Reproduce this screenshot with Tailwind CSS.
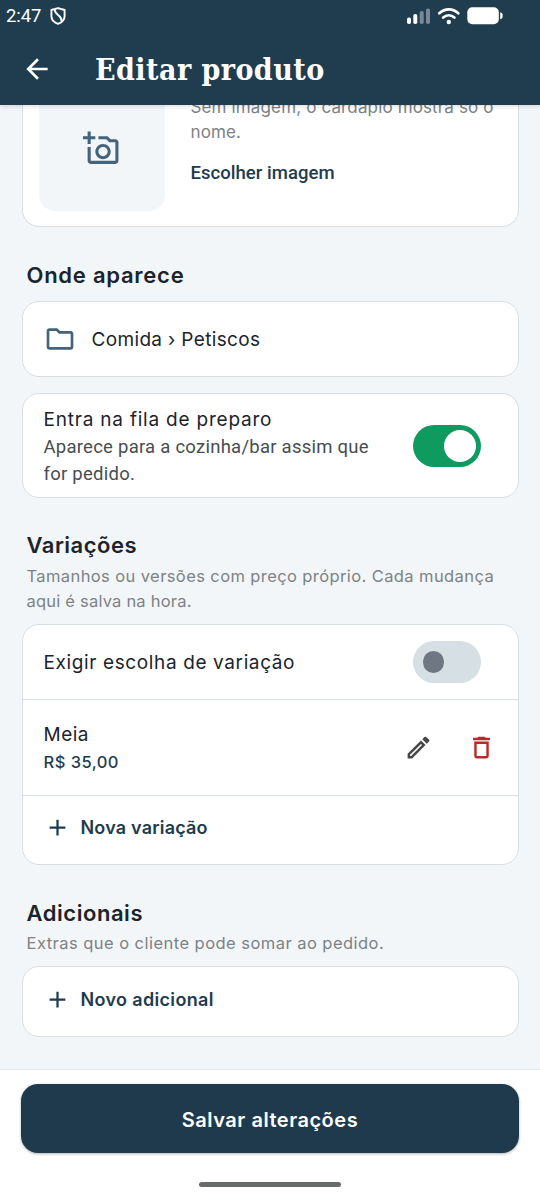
<!DOCTYPE html>
<html lang="pt-BR">
<head>
<meta charset="utf-8">
<meta name="viewport" content="width=device-width, initial-scale=1">
<title>Editar produto</title>
<script src="https://cdn.jsdelivr.net/npm/@tailwindcss/browser@4"></script>
</head>
<body class="bg-white">
<div class="flex h-[1200px] w-[540px] flex-col overflow-hidden bg-[#f3f6f8] font-['Inter','Liberation_Sans',sans-serif] text-[#1b242c] whitespace-nowrap">

  <header class="z-10 flex h-[105px] shrink-0 flex-col bg-[#203d50] text-white shadow-[0_1px_5px_rgba(0,0,0,0.16)]">
    <div class="flex h-8 items-center justify-between pl-[6px] pr-[37px]">
      <div class="flex items-center gap-[9px] font-[Roboto,sans-serif]">
        <span class="text-[18.5px] leading-8 tracking-[-0.1px]">2:47</span>
        <svg class="h-[18px] w-4" viewBox="0 0 16 18" fill="none" stroke="currentColor" stroke-width="1.9" stroke-linejoin="round"><path d="M8 1.100 14.600 3v6c0 3.600-2.600 6.500-6.600 7.900C4 15.500 1.400 12.600 1.400 9V3z"/><path d="M4.800 2.500C4.600 8.500 11.800 7.500 11.600 14"/></svg>
      </div>
      <div class="flex items-center">
        <svg class="h-[18px] w-24" viewBox="0 0 96 18" fill="currentColor"><rect x="0" y="10.500" width="4" height="6.500" rx="1.800"/><rect x="6.300" y="7" width="4" height="10" rx="1.800"/><rect x="12.700" y="4" width="4" height="13" rx="1.800" opacity=".4"/><rect x="19" y="1.500" width="4" height="15.500" rx="1.800" opacity=".4"/><g fill="none" stroke="currentColor" stroke-width="2.700" stroke-linecap="round"><path d="M32.300 6.200c5.500-5.200 13.500-5.200 19 0"/><path d="M36.200 10.500c3.400-3 7.800-3 11.200 0"/></g><circle cx="41.800" cy="15" r="2.200"/><rect x="60.300" y=".3" width="31.500" height="17" rx="5"/><path d="M93.200 5.300c1.700.3 2.500 1.500 2.500 3.500s-.8 3.200-2.500 3.500z"/></svg>
      </div>
    </div>
    <div class="flex h-[73px] items-center pl-[21px]">
      <svg class="size-8" viewBox="0 0 24 24" fill="currentColor"><path d="M20 11H7.830l5.590-5.590L12 4l-8 8 8 8 1.410-1.410L7.830 13H20v-2z"/></svg>
      <h1 class="ml-[42px] pt-[2px] font-['DejaVu_Serif_Condensed','DejaVu_Serif',serif] text-[30px] font-bold leading-[40px] tracking-[0.450px] [font-stretch:condensed]">Editar produto</h1>
    </div>
  </header>

  <main class="flex h-[964px] shrink-0 flex-col px-[21.500px]">
    <section class="flex h-[122px] shrink-0 rounded-b-[17px] border-x border-b border-[#d8dfe3] bg-white pl-4">
      <div class="flex h-[106px] w-[126px] items-center justify-center rounded-b-2xl bg-[#f3f6f8] pb-5">
        <svg class="size-[37px] text-[#43647a]" viewBox="0 0 24 24" fill="currentColor"><path d="M21 6h-3.170L16 4h-6v2h5.120l1.830 2H21v12H5v-9H3v9c0 1.100.9 2 2 2h16c1.100 0 2-.9 2-2V8c0-1.100-.9-2-2-2zM8 14c0 2.760 2.240 5 5 5s5-2.240 5-5-2.240-5-5-5-5 2.240-5 5zm5-3c1.650 0 3 1.350 3 3s-1.350 3-3 3-3-1.350-3-3 1.350-3 3-3zM5 6h3V4H5V1H3v3H0v2h3v3h2z"/></svg>
      </div>
      <div class="ml-[26px] h-[121px]">
        <p class="-mt-[10px] text-[17px] leading-[25px] tracking-[0.140px] text-[#7c8285]">Sem imagem, o cardápio mostra só o<br>nome.</p>
        <p class="mt-[15px] font-[Roboto,sans-serif] text-[18.500px] font-medium leading-[26px] tracking-[0.040px] text-[#1f3b4e]">Escolher imagem</p>
      </div>
    </section>

    <h2 class="mt-[34px] shrink-0 pl-[5px] text-[22px] font-semibold leading-7 tracking-[0.750px]">Onde aparece</h2>
    <section class="mt-[12px] flex h-[76px] shrink-0 items-center rounded-[17px] border border-[#d8dfe3] bg-white pl-[21px]">
      <svg class="size-8 text-[#43647a]" viewBox="0 0 24 24" fill="currentColor"><path d="M9.170 6l2 2H20v10H4V6h5.170M10 4H4c-1.100 0-1.990.9-1.990 2L2 18c0 1.100.9 2 2 2h16c1.100 0 2-.9 2-2V8c0-1.100-.9-2-2-2h-8l-2-2z"/></svg>
      <span class="ml-[16px] pt-[2px] text-[19px] leading-7 tracking-[0.340px]">Comida › Petiscos</span>
    </section>

    <section class="mt-4 flex h-[105px] shrink-0 items-center justify-between rounded-[17px] border border-[#d8dfe3] bg-white pl-[21px] pr-[37px]">
      <div class="pt-[2px]">
        <p class="text-[19px] leading-[28px] tracking-[0.790px]">Entra na fila de preparo</p>
        <p class="font-[Roboto,sans-serif] text-[18.500px] leading-[26.500px] tracking-[0.250px] text-[#474d4f]">Aparece para a cozinha/bar assim que<br>for pedido.</p>
      </div>
      <div class="flex h-[42px] w-[68px] items-center justify-end rounded-full bg-[#0f9a60] pr-[5px]"><div class="size-8 rounded-full bg-white"></div></div>
    </section>

    <h2 class="mt-[33px] shrink-0 pl-[5px] text-[22px] font-semibold leading-7 tracking-[0.500px]">Variações</h2>
    <p class="mt-[5px] shrink-0 pl-[5px] text-[16.500px] leading-[25px] tracking-[0.400px] text-[#7c8285]">Tamanhos ou versões com preço próprio. Cada mudança<br><span class="tracking-[0.210px]">aqui é salva na hora.</span></p>
    <section class="mt-[10px] flex h-[241px] shrink-0 flex-col rounded-[17px] border border-[#d8dfe3] bg-white">
      <div class="flex h-[75px] items-center justify-between border-b border-[#d8dfe3] pl-[21px] pr-[37px]">
        <span class="pt-[2px] text-[19px] leading-7 tracking-[0.620px]">Exigir escolha de variação</span>
        <div class="flex h-[42px] w-[68px] items-center rounded-full bg-[#d6dfe3] pl-[10px]"><div class="size-[21.500px] rounded-full bg-[#6f7882]"></div></div>
      </div>
      <div class="flex h-[96px] items-center justify-between border-b border-[#d8dfe3] pl-[21px] pr-[22px]">
        <div class="pt-[2px]">
          <p class="text-[19px] leading-7 tracking-[0.490px]">Meia</p>
          <p class="text-[16.500px] font-medium leading-[27px] tracking-[0.460px] text-[#1f3b4e]">R$ 35,00</p>
        </div>
        <div class="flex items-center gap-[34px]">
          <svg class="size-[29px] text-[#444746]" viewBox="0 0 24 24" fill="currentColor"><path d="M14.060 9.020l.92.92L5.920 19H5v-.92l9.060-9.060M17.660 3c-.25 0-.51.1-.7.290l-1.830 1.830 3.750 3.750 1.830-1.830c.39-.39.39-1.020 0-1.410l-2.340-2.340c-.2-.2-.45-.290-.71-.290zm-3.600 3.190L3 17.250V21h3.750L17.810 9.940l-3.750-3.750z"/></svg>
          <svg class="size-[29px] text-[#bb2a28]" viewBox="0 0 24 24" fill="currentColor"><path d="M6 19c0 1.100.9 2 2 2h8c1.100 0 2-.9 2-2V7H6v12zM8 9h8v10H8V9zm7.500-5l-1-1h-5l-1 1H5v2h14V4h-3.500z"/></svg>
        </div>
      </div>
      <div class="flex h-[63px] items-center pl-[21px] text-[#1f3b4e]">
        <svg class="size-[27px]" viewBox="0 0 24 24" fill="currentColor"><path d="M19 13h-6v6h-2v-6H5v-2h6V5h2v6h6v2z"/></svg>
        <span class="ml-[10px] pt-px text-[18px] font-semibold leading-7 tracking-[0.200px]">Nova variação</span>
      </div>
    </section>

    <h2 class="mt-[34px] shrink-0 pl-[5px] text-[22px] font-semibold leading-7 tracking-[0.550px]">Adicionais</h2>
    <p class="mt-[4px] shrink-0 pl-[5px] text-[16.500px] leading-[25px] tracking-[0.460px] text-[#7c8285]">Extras que o cliente pode somar ao pedido.</p>
    <section class="mt-[10px] flex h-[71px] shrink-0 items-center rounded-[17px] border border-[#d8dfe3] bg-white pb-[5px] pl-[21px] text-[#1f3b4e]">
      <svg class="size-[27px]" viewBox="0 0 24 24" fill="currentColor"><path d="M19 13h-6v6h-2v-6H5v-2h6V5h2v6h6v2z"/></svg>
      <span class="ml-[10px] pt-[2px] text-[18px] font-semibold leading-7 tracking-[0.340px]">Novo adicional</span>
    </section>
  </main>

  <footer class="flex h-[131px] shrink-0 flex-col items-center border-t border-[#e2e6e9] bg-white px-[21px] pt-[14px]">
    <button class="h-[69px] w-full rounded-[17px] bg-[#1f3a4d] pt-[2px] text-[20px] font-semibold tracking-[0.520px] text-white shadow-[0_1px_3px_rgba(0,0,0,0.3)]">Salvar alterações</button>
    <div class="mt-[29px] h-[5px] w-[142px] rounded-full bg-[#676b6c]"></div>
  </footer>
</div>
</body>
</html>
